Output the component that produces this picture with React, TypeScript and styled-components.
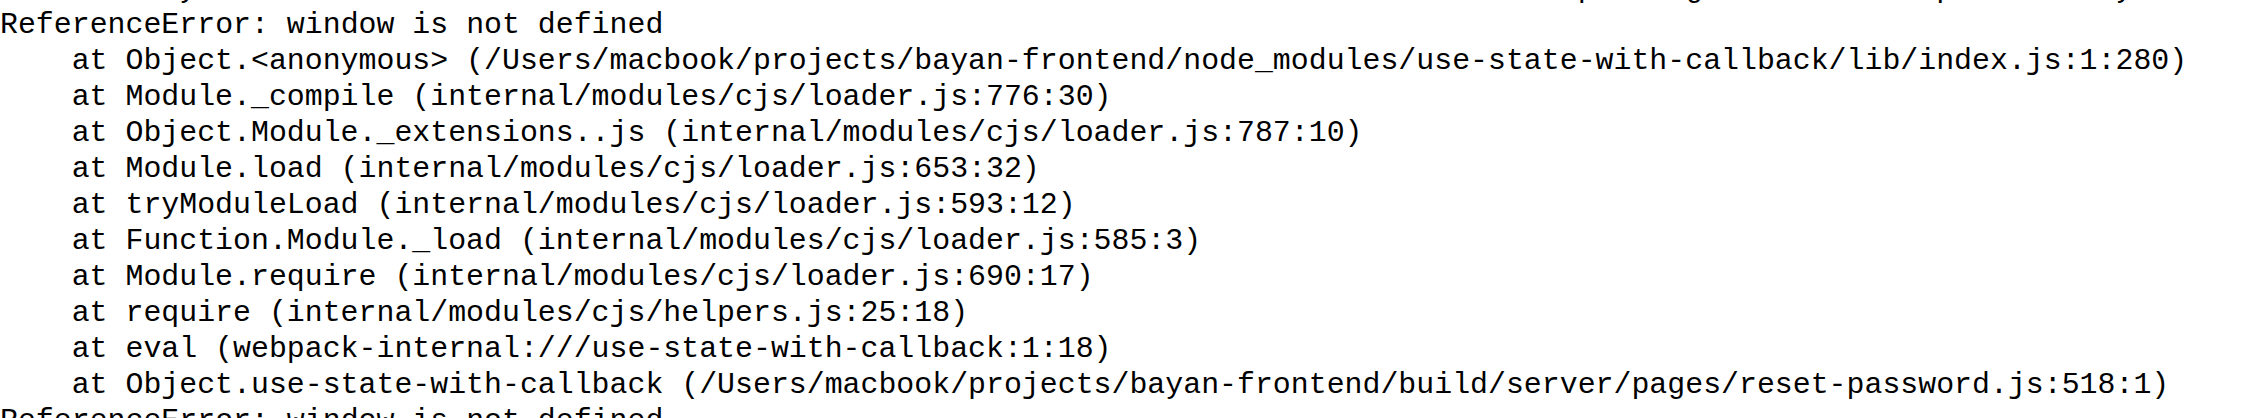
import React from "react";
import styled, { createGlobalStyle } from "styled-components";

const GlobalStyle = createGlobalStyle`
  html, body {
    margin: 0;
    padding: 0;
    background: #ffffff;
    overflow: hidden;
  }
`;

const Terminal = styled.div`
  display: flex;
  flex-direction: column;
  margin-top: -29px;
  font-family: "Liberation Mono", "DejaVu Sans Mono", monospace;
  font-size: 29.88px;
  letter-spacing: 0px;
  line-height: 36px;
  color: #000000;
  white-space: pre;
`;

const Line = styled.div<{ $indent?: boolean }>`
  height: 36px;
  padding-left: ${(p) => (p.$indent ? "71.7px" : "0")};
`;

const prevLine =
  "Make sure your code touches the window in the render while the server builds the static packing the html in prerender yet";

const frames = [
  "at Object.<anonymous> (/Users/macbook/projects/bayan-frontend/node_modules/use-state-with-callback/lib/index.js:1:280)",
  "at Module._compile (internal/modules/cjs/loader.js:776:30)",
  "at Object.Module._extensions..js (internal/modules/cjs/loader.js:787:10)",
  "at Module.load (internal/modules/cjs/loader.js:653:32)",
  "at tryModuleLoad (internal/modules/cjs/loader.js:593:12)",
  "at Function.Module._load (internal/modules/cjs/loader.js:585:3)",
  "at Module.require (internal/modules/cjs/loader.js:690:17)",
  "at require (internal/modules/cjs/helpers.js:25:18)",
  "at eval (webpack-internal:///use-state-with-callback:1:18)",
  "at Object.use-state-with-callback (/Users/macbook/projects/bayan-frontend/build/server/pages/reset-password.js:518:1)",
];

export default function App() {
  return (
    <>
      <GlobalStyle />
      <Terminal>
        <Line>{prevLine}</Line>
        <Line>ReferenceError: window is not defined</Line>
        {frames.map((f) => (
          <Line key={f} $indent>
            {f}
          </Line>
        ))}
        <Line>ReferenceError: window is not defined</Line>
      </Terminal>
    </>
  );
}
